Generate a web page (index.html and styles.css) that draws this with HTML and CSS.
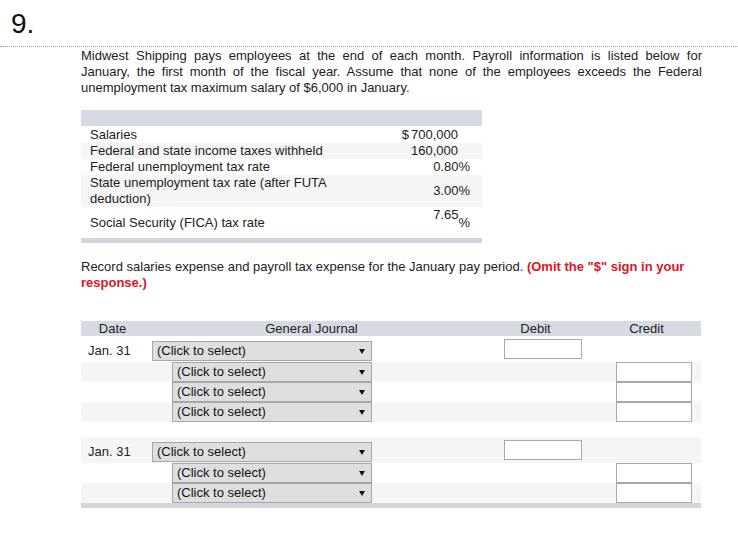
FILE: index.html
```html
<!DOCTYPE html>
<html lang="en">
<head>
<meta charset="utf-8">
<title>Question 9</title>
<link rel="stylesheet" href="styles.css">
</head>
<body>
<div class="qnum">9.</div>
<div class="content">
  <p class="intro"><span class="ln">Midwest Shipping pays employees at the end of each month. Payroll information is listed below for</span> <span class="ln">January, the first month of the fiscal year. Assume that none of the employees exceeds the Federal</span> <span class="ln last">unemployment tax maximum salary of $6,000 in January.</span></p>

  <table class="data">
    <colgroup><col class="data-lbl"><col class="data-val"></colgroup>
    <tr class="band-top"><td colspan="2"></td></tr>
    <tr class="first"><td class="lbl">Salaries</td><td class="val amt"><span class="cur">$</span>700,000</td></tr>
    <tr class="alt"><td class="lbl">Federal and state income taxes withheld</td><td class="val amt">160,000</td></tr>
    <tr><td class="lbl">Federal unemployment tax rate</td><td class="val">0.80%</td></tr>
    <tr class="alt state"><td class="lbl">State unemployment tax rate (after FUTA deduction)</td><td class="val">3.00%</td></tr>
    <tr class="fica"><td class="lbl">Social Security (FICA) tax rate</td><td class="val"><span class="sup">7.65</span>%</td></tr>
    <tr class="band-bot"><td colspan="2"></td></tr>
  </table>

  <p class="instr">Record salaries expense and payroll tax expense for the January pay period. <strong class="warn">(Omit the "$" sign in your response.)</strong></p>

  <table class="journal">
    <colgroup><col class="j-date"><col class="j-acct"><col class="j-dr"><col class="j-cr"></colgroup>
    <thead>
      <tr><th>Date</th><th>General Journal</th><th>Debit</th><th>Credit</th></tr>
    </thead>
    <tbody>
      <tr class="entry">
        <td class="date">Jan. 31</td>
        <td class="acct"><div class="pick"><span>(Click to select)</span><svg class="caret" width="6" height="5" viewBox="0 0 6 5"><polygon points="0,0 6,0 3,5" fill="#111"/></svg></div></td>
        <td class="dr"><div class="box box-dr"></div></td>
        <td class="cr"></td>
      </tr>
      <tr class="alt line">
        <td></td>
        <td class="acct"><div class="pick ind"><span>(Click to select)</span><svg class="caret" width="6" height="5" viewBox="0 0 6 5"><polygon points="0,0 6,0 3,5" fill="#111"/></svg></div></td>
        <td></td>
        <td class="cr"><div class="box box-cr"></div></td>
      </tr>
      <tr class="line">
        <td></td>
        <td class="acct"><div class="pick ind"><span>(Click to select)</span><svg class="caret" width="6" height="5" viewBox="0 0 6 5"><polygon points="0,0 6,0 3,5" fill="#111"/></svg></div></td>
        <td></td>
        <td class="cr"><div class="box box-cr"></div></td>
      </tr>
      <tr class="alt line">
        <td></td>
        <td class="acct"><div class="pick ind"><span>(Click to select)</span><svg class="caret" width="6" height="5" viewBox="0 0 6 5"><polygon points="0,0 6,0 3,5" fill="#111"/></svg></div></td>
        <td></td>
        <td class="cr"><div class="box box-cr"></div></td>
      </tr>
      <tr class="spacer"><td colspan="4"></td></tr>
      <tr class="alt entry">
        <td class="date">Jan. 31</td>
        <td class="acct"><div class="pick"><span>(Click to select)</span><svg class="caret" width="6" height="5" viewBox="0 0 6 5"><polygon points="0,0 6,0 3,5" fill="#111"/></svg></div></td>
        <td class="dr"><div class="box box-dr"></div></td>
        <td class="cr"></td>
      </tr>
      <tr class="line">
        <td></td>
        <td class="acct"><div class="pick ind"><span>(Click to select)</span><svg class="caret" width="6" height="5" viewBox="0 0 6 5"><polygon points="0,0 6,0 3,5" fill="#111"/></svg></div></td>
        <td></td>
        <td class="cr"><div class="box box-cr"></div></td>
      </tr>
      <tr class="alt line">
        <td></td>
        <td class="acct"><div class="pick ind"><span>(Click to select)</span><svg class="caret" width="6" height="5" viewBox="0 0 6 5"><polygon points="0,0 6,0 3,5" fill="#111"/></svg></div></td>
        <td></td>
        <td class="cr"><div class="box box-cr"></div></td>
      </tr>
    </tbody>
    <tfoot>
      <tr class="band-bot"><td colspan="4"></td></tr>
    </tfoot>
  </table>
</div>
</body>
</html>
```

FILE: styles.css
```css
html, body {
  margin: 0;
  padding: 0;
  background: #ffffff;
}

body {
  font-family: "Liberation Sans", Arial, sans-serif;
  font-size: 13px;
  line-height: 16px;
  color: #222222;
}

.qnum {
  font-size: 28px;
  line-height: 32px;
  padding: 8px 0 6px 11px;
  color: #111111;
  border-bottom: 1px dotted #9a9a9a;
}

.content {
  padding: 1px 36px 0 81px;
}

.intro {
  margin: 0;
}

.intro .ln {
  display: block;
  text-align: justify;
  text-align-last: justify;
}

.intro .ln.last {
  text-align-last: left;
}

/* ---- data table ---- */
.data {
  margin-top: 14px;
  width: 401px;
  border-collapse: collapse;
  table-layout: fixed;
}

.data-lbl { width: 259px; }
.data-val { width: 142px; }

.data td {
  padding: 0;
}

.data .band-top td {
  height: 16px;
  background: #d6dae3;
}

.data .band-bot td {
  height: 5px;
  background: #d3d6df;
}

.data .alt td {
  background: #f5f5f5;
}

.data .lbl {
  padding-left: 9px;
}

.data .first td {
  padding-top: 1px;
}

.data .val {
  text-align: right;
  padding-right: 12px;
}

.data .amt {
  padding-right: 24px;
}

.data .cur {
  margin-right: 2px;
}

.data .fica td {
  vertical-align: top;
  padding-top: 8px;
  padding-bottom: 7px;
}

.data .sup {
  vertical-align: 8px;
  line-height: 0;
}

/* ---- instruction ---- */
.instr {
  margin: 16px 0 0;
}

.warn {
  color: #e0141e;
  font-weight: bold;
}

/* ---- journal ---- */
.journal {
  margin-top: 30px;
  width: 620px;
  border-collapse: collapse;
  table-layout: fixed;
}

.j-date { width: 63px; }
.j-acct { width: 335px; }
.j-dr { width: 113px; }
.j-cr { width: 109px; }

.journal th {
  font-weight: normal;
  height: 15px;
  line-height: 15px;
  padding: 0;
  text-align: center;
  background: #d6dae3;
  color: #222222;
}

.journal td {
  padding: 0;
  vertical-align: top;
}

.journal .alt td {
  background: #f5f5f5;
}

.journal .entry td {
  height: 21px;
}

.journal .entry .date,
.journal .entry .acct {
  padding-top: 5px;
}

.journal .entry .dr {
  padding-top: 3px;
}

.journal .line td {
  height: 20px;
}

.journal .spacer td {
  height: 15px;
}

.journal .date {
  padding-left: 7px;
  line-height: 20px;
}

.journal .acct {
  padding-left: 8px;
}

.pick {
  box-sizing: border-box;
  width: 220px;
  height: 20px;
  border: 1px solid #a6a6a6;
  background: #dedede;
  padding: 0 6px 0 4px;
  display: flex;
  align-items: center;
  justify-content: space-between;
  line-height: 18px;
  color: #111111;
}

.pick.ind {
  width: 200px;
  margin-left: 20px;
}

.caret {
  display: block;
  flex: none;
}

.box {
  box-sizing: border-box;
  height: 20px;
  border: 1px solid #a8a8a8;
  background: #ffffff;
}

.box-dr {
  width: 78px;
  margin-left: 25px;
}

.box-cr {
  width: 76px;
  margin-left: 24px;
}

.journal .band-bot td {
  height: 5px;
  background: #d3d6df;
}
```
